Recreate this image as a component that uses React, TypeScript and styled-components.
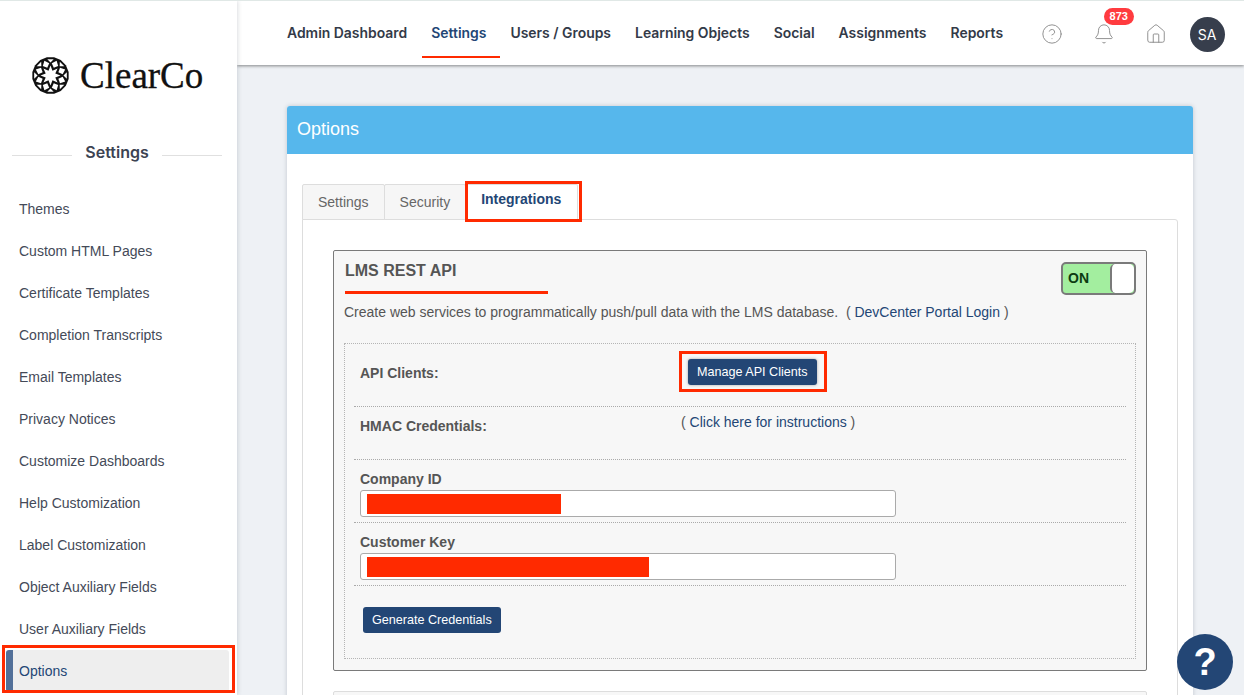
import * as React from "react"
import styled, { createGlobalStyle } from "styled-components"
import { Bell, CircleHelp, House } from "lucide-react"

const NAVY = "#234675"
const MARK = "#ff2a00"

const GlobalStyle = createGlobalStyle`
  html, body {
    margin: 0;
    height: 100%;
    overflow: hidden;
  }
  * {
    box-sizing: border-box;
  }
  body {
    font-family: "Liberation Sans", Arial, sans-serif;
    color: #555;
  }
`

const Page = styled.div`
  position: relative;
  display: flex;
  width: 1244px;
  height: 695px;
  overflow: hidden;
  background: #eef1f5;
  border-top: 1px solid #e0e8e6;
`

const Sidebar = styled.aside`
  position: relative;
  z-index: 2;
  flex: 0 0 237px;
  background: #fff;
  box-shadow: 1px 0 4px rgba(60, 70, 90, 0.18);
`

const LogoRow = styled.div`
  display: flex;
  align-items: center;
  gap: 11px;
  height: 113px;
  padding: 35px 0 0 32px;
`

const LogoText = styled.span`
  font-family: "Liberation Serif", serif;
  font-size: 37px;
  line-height: 1;
  color: #111;
  -webkit-text-stroke: 0.3px #111;
`

const SideHeading = styled.div`
  display: flex;
  align-items: center;
  gap: 13px;
  height: 74px;
  padding: 2px 15px 0 12px;
  font-family: Inter, sans-serif;
  font-size: 16px;
  font-weight: 600;
  color: #3c4352;

  &::before,
  &::after {
    content: "";
    flex: 1;
    height: 1px;
    margin-top: 6px;
    background: #e0e0e0;
  }
`

const SideList = styled.nav`
  display: flex;
  flex-direction: column;
`

const SideItem = styled.a<{ $active?: boolean }>`
  position: relative;
  display: flex;
  align-items: center;
  height: 42px;
  margin: 0 8px 0 6px;
  border-radius: 3px;
  font-size: 14px;
  color: ${(p) => (p.$active ? NAVY : "#444a58")};
  background: ${(p) => (p.$active ? "#eeeeee" : "transparent")};
  border-left: ${(p) => (p.$active ? "7px solid #527099" : "0 solid transparent")};
  padding-left: ${(p) => (p.$active ? "6px" : "13px")};
`

const Main = styled.div`
  flex: 1;
  min-width: 0;
  display: flex;
  flex-direction: column;
`

const Header = styled.header`
  position: relative;
  z-index: 1;
  flex: 0 0 64px;
  display: flex;
  align-items: center;
  padding-left: 50px;
  background: #fff;
  box-shadow: 0 1px 3px rgba(0, 0, 0, 0.45);
`

const TopNav = styled.nav`
  display: flex;
  gap: 24px;
  position: relative;
`

const TopLink = styled.a<{ $active?: boolean }>`
  position: relative;
  font-family: Inter, sans-serif;
  font-size: 13.93px;
  font-weight: 600;
  white-space: nowrap;
  color: ${(p) => (p.$active ? NAVY : "#333a48")};

  ${(p) =>
    p.$active &&
    `
    &::after {
      content: "";
      position: absolute;
      left: -9px;
      right: -14px;
      bottom: -17px;
      height: 2.5px;
      background: ${MARK};
    }
  `}
`

const IconGroup = styled.div`
  display: flex;
  align-items: center;
  margin: 2px 0 0 22.5px;
  color: #888;
`

const IconSlot = styled.span`
  position: relative;
  display: flex;
  justify-content: center;
  width: 52px;
`

const Badge = styled.span`
  position: absolute;
  top: -15px;
  left: 26px;
  padding: 0 6px;
  height: 17px;
  line-height: 17px;
  border-radius: 9px;
  font-size: 11px;
  font-weight: 700;
  color: #fff;
  background: #ff3b3f;
`

const Avatar = styled.span`
  display: flex;
  align-items: center;
  justify-content: center;
  width: 35px;
  height: 35px;
  margin-left: 8px;
  border-radius: 50%;
  font-family: Inter, sans-serif;
  font-size: 14px;
  color: #fff;
  background: #373e4c;
`

const Content = styled.main`
  flex: 1;
  min-height: 0;
  padding: 41px 51px 0 50px;
`

const Card = styled.section`
  height: 700px;
  background: #fff;
  border-radius: 3px 3px 0 0;
  box-shadow: 0 0 4px rgba(60, 70, 90, 0.25);
`

const CardHeader = styled.h2`
  margin: 0;
  height: 48px;
  padding-left: 10px;
  border-radius: 3px 3px 0 0;
  font-size: 18px;
  font-weight: 400;
  line-height: 46px;
  color: #fff;
  background: #56b7ec;
`

const CardBody = styled.div`
  padding: 30px 15px 0;
`

const Tabs = styled.div`
  display: flex;
  height: 36px;
`

const Tab = styled.a<{ $active?: boolean }>`
  position: relative;
  z-index: 1;
  height: 36px;
  padding: ${(p) => (p.$active ? "6px 16px 0 16px" : "9px 15px 0")};
  border: 1px solid #ddd;
  border-left-width: ${(p) => (p.$active ? "0" : "1px")};
  border-bottom-color: ${(p) => (p.$active ? "#fff" : "#ddd")};
  border-radius: 2px 2px 0 0;
  font-size: 14px;
  font-weight: ${(p) => (p.$active ? 700 : 400)};
  color: ${(p) => (p.$active ? NAVY : "#666")};
  background: ${(p) => (p.$active ? "#fff" : "#f6f6f6")};

  & + & {
    margin-left: -1px;
  }
`

const TabPanel = styled.div`
  margin-top: -1px;
  height: 600px;
  padding: 30px 30px 0;
  border: 1px solid #ddd;
  border-radius: 0 3px 0 0;
`

const ApiBox = styled.div`
  height: 421px;
  padding: 10px 10px 0;
  border: 1px solid #7a7a7a;
  border-radius: 2px;
  background: #f7f7f7;
`

const ApiTop = styled.div`
  display: flex;
  justify-content: space-between;
  height: 41px;
`

const ApiTitle = styled.h3`
  position: relative;
  margin: 0;
  padding: 1px 0 0 1px;
  font-size: 16px;
  line-height: 18px;
  font-weight: 700;
  color: #555;

  &::after {
    content: "";
    position: absolute;
    left: 1px;
    top: 30px;
    width: 203px;
    height: 3px;
    background: ${MARK};
  }
`

const Toggle = styled.div`
  display: flex;
  width: 75px;
  height: 33px;
  margin-top: 1px;
  border: 2px solid #7a7a7a;
  border-radius: 5px;
  background: #a3ee9f;
  overflow: hidden;
`

const ToggleLabel = styled.span`
  flex: 1;
  padding-left: 5px;
  font-size: 14px;
  font-weight: 700;
  line-height: 29px;
  color: #0d3b12;
`

const ToggleKnob = styled.span`
  width: 24px;
  background: #fff;
  border-left: 2px solid #7a7a7a;
  border-radius: 5px;
`

const Description = styled.p`
  margin: 0;
  height: 41px;
  font-size: 14px;
  line-height: 20px;
  color: #555;
`

const TextLink = styled.a`
  color: ${NAVY};
`

const Credentials = styled.div`
  height: 316px;
  padding: 0 9px;
  border: 1px dotted #b5b5b5;
`

const Row = styled.div<{ $height: number }>`
  display: grid;
  grid-template-columns: 321px 1fr;
  height: ${(p) => p.$height}px;
  padding: 0 6px;
  border-bottom: 1px dotted #aaa;
`

const RowLabel = styled.div<{ $top: number }>`
  padding-top: ${(p) => p.$top}px;
  font-size: 14px;
  font-weight: 700;
  color: #555;
`

const RowValue = styled.div<{ $top: number }>`
  padding-top: ${(p) => p.$top}px;
  font-size: 14px;
  color: #555;
`

const FieldRow = styled.div<{ $height: number }>`
  height: ${(p) => p.$height}px;
  padding: 11px 6px 0;
  border-bottom: 1px dotted #aaa;
`

const FieldLabel = styled.div`
  font-size: 14px;
  font-weight: 700;
  line-height: 16px;
  color: #555;
`

const FieldInput = styled.div`
  display: flex;
  align-items: center;
  width: 536px;
  height: 27px;
  margin-top: 3px;
  padding-left: 6px;
  border: 1px solid #aaa;
  border-radius: 3px;
  background: #fff;
`

const Redaction = styled.span<{ $width: number }>`
  width: ${(p) => p.$width}px;
  height: 20px;
  background: ${MARK};
`

const Button = styled.button<{ $raised?: boolean }>`
  height: 26px;
  padding: 0 9px;
  border: 0;
  border-radius: 3px;
  font-family: "Liberation Sans", Arial, sans-serif;
  font-size: 12.6px;
  color: #fff;
  background: ${NAVY};
  box-shadow: ${(p) => (p.$raised ? "0 0 3px rgba(0, 0, 0, 0.35)" : "none")};
`

const ManageWrap = styled.span`
  position: relative;
  display: inline-block;
  margin-left: 7px;

  &::after {
    content: "";
    position: absolute;
    inset: -8px -10px -7px -9px;
    border: 3px solid ${MARK};
    pointer-events: none;
  }
`

const GenerateRow = styled.div`
  padding: 21px 0 0 9px;
`

const NextBox = styled.div`
  height: 60px;
  margin-top: 20px;
  border: 1px solid #ddd;
  border-radius: 2px;
  background: #f7f7f7;
`

const Callout = styled.span<{ $x: number; $y: number; $w: number; $h: number }>`
  position: absolute;
  z-index: 3;
  left: ${(p) => p.$x}px;
  top: ${(p) => p.$y}px;
  width: ${(p) => p.$w}px;
  height: ${(p) => p.$h}px;
  border: 3px solid ${MARK};
  pointer-events: none;
`

const HelpBubble = styled.button`
  position: absolute;
  z-index: 4;
  right: 11px;
  bottom: 5px;
  width: 56px;
  height: 56px;
  padding: 0;
  border: 0;
  border-radius: 50%;
  font-family: "Liberation Sans", Arial, sans-serif;
  font-size: 38px;
  font-weight: 700;
  line-height: 56px;
  color: #fff;
  background: ${NAVY};
`

const polar = (r: number, deg: number) => {
  const a = ((deg - 90) * Math.PI) / 180
  return `${(50 + r * Math.cos(a)).toFixed(2)},${(50 + r * Math.sin(a)).toFixed(2)}`
}

const STEPS = [0, 45, 90, 135, 180, 225, 270, 315]

const starPoints = STEPS.flatMap((d) => [polar(27, d), polar(14, d + 22.5)]).join(" ")

const Logo = () => (
  <svg width="37" height="37" viewBox="0 0 100 100" aria-hidden="true">
    <polygon
      fill="#111"
      points={Array.from({ length: 16 }, (_, i) => polar(50, i * 22.5 + 11.25)).join(" ")}
    />
    <polygon fill="#fff" points={starPoints} />
    {STEPS.map((d) => (
      <polygon
        key={d}
        fill="#fff"
        points={[polar(23, d + 22.5), polar(33, d + 6), polar(43, d + 22.5), polar(33, d + 39)].join(" ")}
      />
    ))}
    {STEPS.map((d) => (
      <polygon
        key={`t${d}`}
        fill="#fff"
        points={[polar(35, d), polar(45, d - 11), polar(45, d + 11)].join(" ")}
      />
    ))}
  </svg>
)

const sideItems = [
  "Themes",
  "Custom HTML Pages",
  "Certificate Templates",
  "Completion Transcripts",
  "Email Templates",
  "Privacy Notices",
  "Customize Dashboards",
  "Help Customization",
  "Label Customization",
  "Object Auxiliary Fields",
  "User Auxiliary Fields",
  "Options",
]

const topLinks = [
  "Admin Dashboard",
  "Settings",
  "Users / Groups",
  "Learning Objects",
  "Social",
  "Assignments",
  "Reports",
]

export default function App() {
  return (
    <Page>
      <GlobalStyle />
      <Sidebar>
        <LogoRow>
          <Logo />
          <LogoText>ClearCo</LogoText>
        </LogoRow>
        <SideHeading>Settings</SideHeading>
        <SideList>
          {sideItems.map((item) => (
            <SideItem key={item} $active={item === "Options"}>
              {item}
            </SideItem>
          ))}
        </SideList>
      </Sidebar>
      <Main>
        <Header>
          <TopNav>
            {topLinks.map((link) => (
              <TopLink key={link} $active={link === "Settings"}>
                {link}
              </TopLink>
            ))}
          </TopNav>
          <IconGroup>
            <IconSlot>
              <CircleHelp size={22} strokeWidth={1} />
            </IconSlot>
            <IconSlot>
              <Bell size={22} strokeWidth={1} />
              <Badge>873</Badge>
            </IconSlot>
            <IconSlot>
              <House size={22} strokeWidth={1} />
            </IconSlot>
            <Avatar>SA</Avatar>
          </IconGroup>
        </Header>
        <Content>
          <Card>
            <CardHeader>Options</CardHeader>
            <CardBody>
              <Tabs>
                <Tab>Settings</Tab>
                <Tab>Security</Tab>
                <Tab $active>Integrations</Tab>
              </Tabs>
              <TabPanel>
                <ApiBox>
                  <ApiTop>
                    <ApiTitle>LMS REST API</ApiTitle>
                    <Toggle>
                      <ToggleLabel>ON</ToggleLabel>
                      <ToggleKnob />
                    </Toggle>
                  </ApiTop>
                  <Description>
                    Create web services to programmatically push/pull data with the LMS database.&nbsp;&nbsp;({" "}
                    <TextLink>DevCenter Portal Login</TextLink> )
                  </Description>
                  <Credentials>
                    <Row $height={63}>
                      <RowLabel $top={21}>API Clients:</RowLabel>
                      <RowValue $top={15}>
                        <ManageWrap>
                          <Button $raised>Manage API Clients</Button>
                        </ManageWrap>
                      </RowValue>
                    </Row>
                    <Row $height={53}>
                      <RowLabel $top={11}>HMAC Credentials:</RowLabel>
                      <RowValue $top={7}>
                        ( <TextLink>Click here for instructions</TextLink> )
                      </RowValue>
                    </Row>
                    <FieldRow $height={63}>
                      <FieldLabel>Company ID</FieldLabel>
                      <FieldInput>
                        <Redaction $width={194} />
                      </FieldInput>
                    </FieldRow>
                    <FieldRow $height={63}>
                      <FieldLabel>Customer Key</FieldLabel>
                      <FieldInput>
                        <Redaction $width={282} />
                      </FieldInput>
                    </FieldRow>
                    <GenerateRow>
                      <Button>Generate Credentials</Button>
                    </GenerateRow>
                  </Credentials>
                </ApiBox>
                <NextBox />
              </TabPanel>
            </CardBody>
          </Card>
        </Content>
      </Main>
      <Callout $x={465} $y={180} $w={117} $h={41} />
      <Callout $x={2} $y={644} $w={233} $h={48} />
      <HelpBubble>?</HelpBubble>
    </Page>
  )
}
